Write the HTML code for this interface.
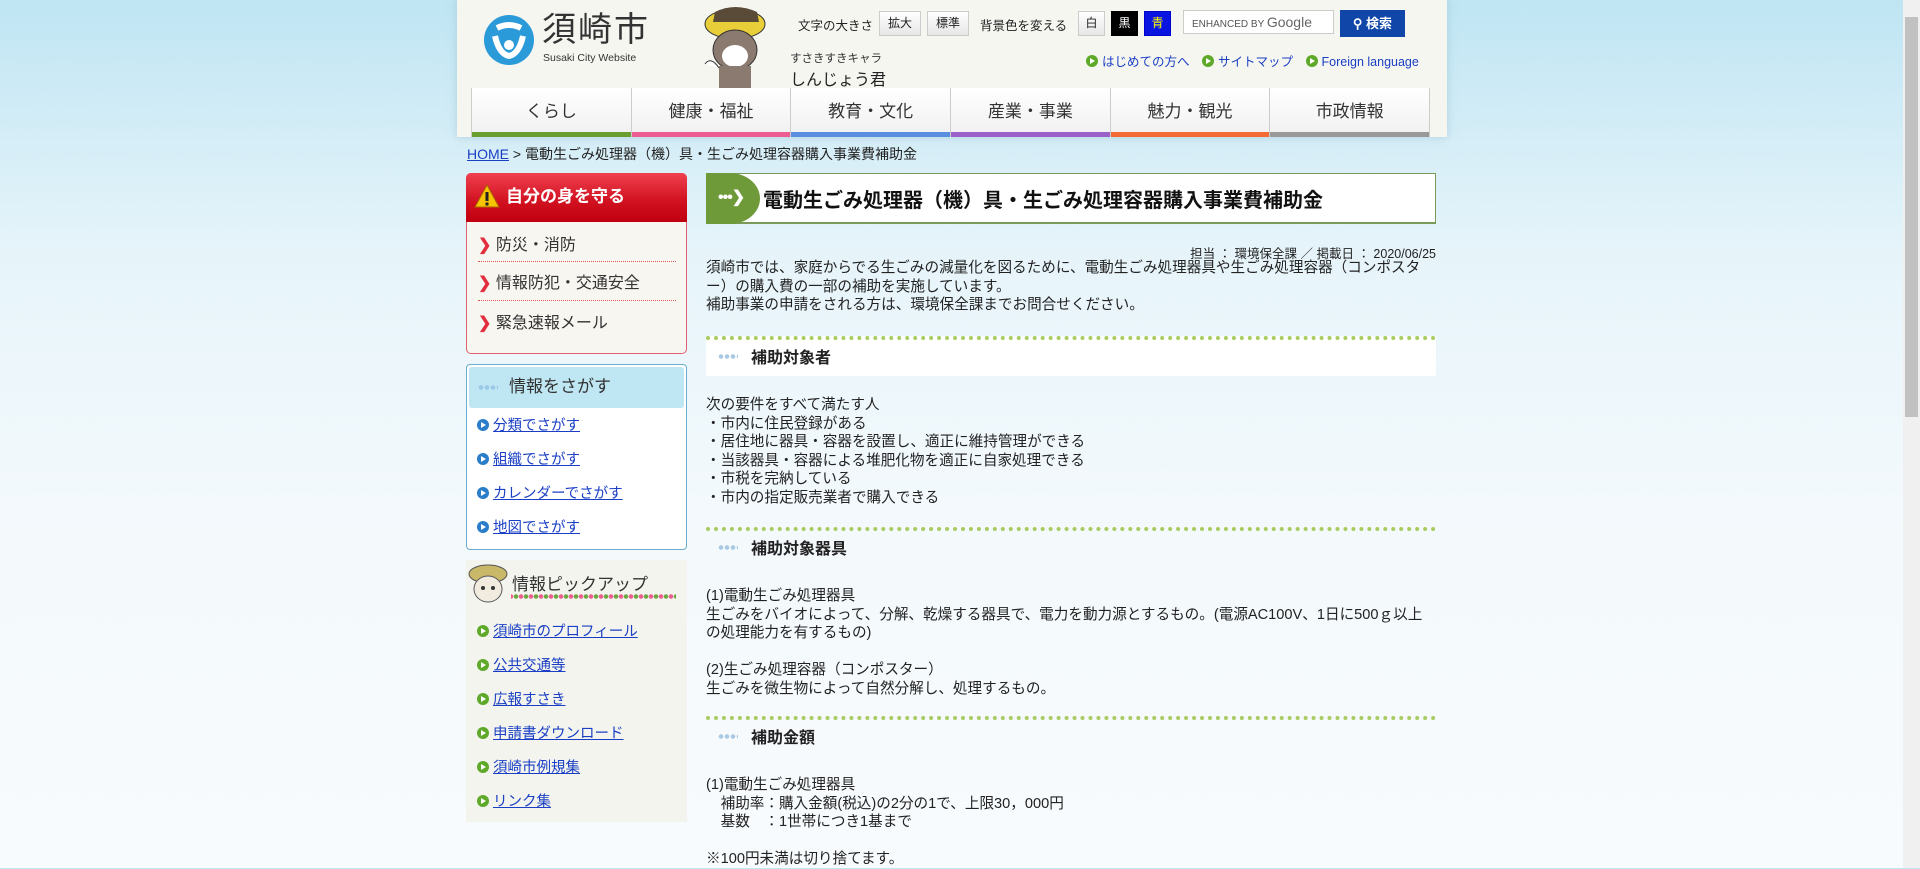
<!DOCTYPE html>
<html><head><meta charset="utf-8">
<style>
*{margin:0;padding:0;box-sizing:border-box}
body{width:1920px;height:868px;overflow:hidden;position:relative;font-family:"Liberation Sans","Noto Sans CJK JP",sans-serif;color:#222;background:linear-gradient(to bottom,#bfe5f3 0,#e6f4fa 250px,#f3f9fc 500px,#f8fbfd 868px)}
.abs{position:absolute}
a{color:#1a3fc4}
#hdr{left:457px;top:0;width:990px;height:137px;background:#f6f6f1;box-shadow:0 0 8px rgba(150,190,210,.6)}
.btn{position:absolute;top:11px;height:25px;border:1px solid #ccc;background:linear-gradient(#fff,#e6e6e6);font-size:12px;line-height:23px;text-align:center}
#nav{left:471px;top:88px;width:959px;height:49px;display:flex}
#nav div{flex:1;background:linear-gradient(#fff,#f0f0f0);border-left:1px solid #ccc;text-align:center;font-size:17px;line-height:48px;color:#333;position:relative}
#nav div:last-child{border-right:1px solid #ccc}
#nav div:after{content:"";position:absolute;left:0;right:0;bottom:0;height:5px;background:var(--c)}
.gl{display:inline-block;width:12px;height:12px;border-radius:50%;background:#5ea82a;vertical-align:-1px;margin-right:4px;position:relative}
.gl:after{content:"";position:absolute;left:4px;top:3px;border-left:5px solid #fff;border-top:3px solid transparent;border-bottom:3px solid transparent}
.bl{background:#2a7dc8}
.side a{font-size:14.5px}
.p{font-size:14.6px;line-height:18.5px}
.h2{position:absolute;left:706px;width:730px;height:40px;background:#fff;border-top:4px dotted #a8cc60}
.h2 span{position:absolute;left:45px;top:4px;font-size:16px;font-weight:bold}
.h2 i{position:absolute;left:12px;top:14px;width:20px;height:5px;background:radial-gradient(circle,#a8c8e4 2px,transparent 2.5px) 0 0/6px 5px repeat-x}
.ri{position:absolute;left:478px;font-size:16px;color:#333;line-height:20px}
.ri b{color:#e03040}
.sep{position:absolute;left:478px;width:198px;border-top:1px dotted #d55}
</style></head><body>
<div id="hdr" class="abs"></div>
<svg class="abs" style="left:483px;top:14px" width="52" height="52" viewBox="0 0 52 52"><circle cx="26" cy="26" r="25" fill="#2b9ad8"/><path d="M14 14 Q26 8 38 14 M12 22 Q16 40 26 42 Q36 40 40 22" stroke="#fff" stroke-width="6" fill="none"/><circle cx="26" cy="31" r="5" fill="#fff"/></svg>
<div class="abs" style="left:542px;top:10px;font-size:34px;line-height:40px;color:#333;letter-spacing:2px">須崎市</div>
<div class="abs" style="left:543px;top:52px;font-size:10.5px;color:#333">Susaki City Website</div>
<svg class="abs" style="left:695px;top:6px" width="84" height="84" viewBox="0 0 84 84"><ellipse cx="40" cy="18" rx="30" ry="15" fill="#e8cf3a" stroke="#333"/><path d="M20 6 Q40 -4 62 6 L64 16 L18 16Z" fill="#5a4a38"/><ellipse cx="40" cy="44" rx="22" ry="20" fill="#8a7a70" stroke="#333"/><ellipse cx="40" cy="50" rx="13" ry="11" fill="#fff"/><rect x="24" y="60" width="32" height="24" fill="#8a7a70"/><path d="M10 58 Q16 50 24 62" stroke="#333" fill="#fff"/></svg>
<div class="abs" style="left:798px;top:15px;font-size:12.5px">文字の大きさ</div>
<div class="btn" style="left:879px;width:42px">拡大</div>
<div class="btn" style="left:927px;width:42px">標準</div>
<div class="abs" style="left:980px;top:15px;font-size:12.5px">背景色を変える</div>
<div class="btn" style="left:1078px;width:27px">白</div>
<div class="btn" style="left:1111px;width:27px;background:#000;color:#fff;border-color:#000">黒</div>
<div class="btn" style="left:1144px;width:27px;background:#0a14e0;color:#ff0;border-color:#00c">青</div>
<div class="abs" style="left:1183px;top:10px;width:151px;height:24px;background:#fff;border:1px solid #ccc;font-size:10px;line-height:22px;padding-left:8px;color:#555">ENHANCED BY <span style="font-size:14px;color:#666">Google</span></div>
<div class="abs" style="left:1340px;top:10px;width:65px;height:27px;background:#1046a8;color:#fff;font-size:13px;font-weight:bold;line-height:27px;text-align:center">&#9906; 検索</div>
<div class="abs" style="left:790px;top:50px;font-size:11.5px;color:#333">すさきすきキャラ</div>
<div class="abs" style="left:790px;top:66px;font-size:16px;color:#222">しんじょう君</div>
<div class="abs" style="left:1086px;top:51px;font-size:12.5px;color:#1a3fc4;white-space:nowrap"><span class="gl"></span>はじめての方へ　<span class="gl"></span>サイトマップ　<span class="gl"></span>Foreign language</div>
<div id="nav" class="abs">
<div style="--c:#6a9e30">くらし</div><div style="--c:#ee5d92">健康・福祉</div><div style="--c:#5a8fe0">教育・文化</div><div style="--c:#9a5fc8">産業・事業</div><div style="--c:#f46a35">魅力・観光</div><div style="--c:#999">市政情報</div>
</div>
<div class="abs" style="left:467px;top:144px;font-size:14px"><a href="#">HOME</a> &gt; 電動生ごみ処理器（機）具・生ごみ処理容器購入事業費補助金</div>

<div class="abs" style="left:466px;top:173px;width:221px;height:181px;background:#f8f6f0;border:1px solid #e06070;border-radius:5px"></div>
<div class="abs" style="left:466px;top:173px;width:221px;height:49px;background:linear-gradient(#f04050,#d0101e 60%,#c00010);border-radius:5px 5px 0 0;color:#fff;font-size:17px;font-weight:bold;line-height:48px;padding-left:40px">自分の身を守る</div>
<svg class="abs" style="left:474px;top:184px" width="26" height="24"><path d="M13 1 L25 23 L1 23Z" fill="#f6c400" stroke="#a60" stroke-width="1"/><rect x="11.5" y="8" width="3" height="9" fill="#222"/><rect x="11.5" y="18.5" width="3" height="3" fill="#222"/></svg>
<div class="ri" style="top:236px"><b>❯</b> 防災・消防</div>
<div class="sep" style="top:261px"></div>
<div class="ri" style="top:274px"><b>❯</b> 情報防犯・交通安全</div>
<div class="sep" style="top:300px"></div>
<div class="ri" style="top:314px"><b>❯</b> 緊急速報メール</div>

<div class="abs" style="left:466px;top:364px;width:221px;height:186px;background:#fff;border:1px solid #6aaed0;border-radius:4px"></div>
<div class="abs" style="left:469px;top:367px;width:215px;height:41px;background:#bfe6f3;border-radius:3px;font-size:17px;line-height:40px;padding-left:40px;color:#333">情報をさがす</div>
<div class="abs" style="left:478px;top:385px;width:20px;height:5px;background:radial-gradient(circle,#9ac8e6 2px,transparent 2.5px) 0 0/6px 5px repeat-x"></div>
<div class="abs side" style="left:477px;top:409px;line-height:34px">
<div><span class="gl bl"></span><a href="#">分類でさがす</a></div>
<div><span class="gl bl"></span><a href="#">組織でさがす</a></div>
<div><span class="gl bl"></span><a href="#">カレンダーでさがす</a></div>
<div><span class="gl bl"></span><a href="#">地図でさがす</a></div>
</div>
<div class="abs" style="left:466px;top:560px;width:221px;height:262px;background:#f4f4ee"></div>
<svg class="abs" style="left:467px;top:562px" width="42" height="42"><ellipse cx="21" cy="12" rx="19" ry="9" fill="#c8b868" stroke="#555"/><ellipse cx="21" cy="27" rx="14" ry="13" fill="#f2ece0" stroke="#555"/><circle cx="16" cy="26" r="2" fill="#333"/><circle cx="26" cy="26" r="2" fill="#333"/></svg>
<div class="abs" style="left:512px;top:570px;font-size:17px;color:#333">情報ピックアップ</div>
<div class="abs" style="left:511px;top:594px;width:165px;height:5px;background:radial-gradient(circle,#6aa840 2px,transparent 2.5px) 0 0/10px 5px,radial-gradient(circle,#ee5d92 2px,transparent 2.5px) 5px 0/10px 5px"></div>
<div class="abs side" style="left:477px;top:615px;line-height:34px">
<div><span class="gl"></span><a href="#">須崎市のプロフィール</a></div>
<div><span class="gl"></span><a href="#">公共交通等</a></div>
<div><span class="gl"></span><a href="#">広報すさき</a></div>
<div><span class="gl"></span><a href="#">申請書ダウンロード</a></div>
<div><span class="gl"></span><a href="#">須崎市例規集</a></div>
<div><span class="gl"></span><a href="#">リンク集</a></div>
</div>

<div class="abs" style="left:706px;top:173px;width:730px;height:51px;background:#fff;border:1px solid #7a9a5a;border-bottom-width:2px"></div>
<div class="abs" style="left:706px;top:173px;width:54px;height:51px;background:#6f9a3a;border-radius:0 30px 30px 0/0 50% 50% 0"></div>
<div class="abs" style="left:718px;top:187px;color:#fff;font-size:16px;font-weight:bold;letter-spacing:-1px">•••❯</div>
<div class="abs" style="left:763px;top:184px;font-size:20px;font-weight:bold;color:#111">電動生ごみ処理器（機）具・生ごみ処理容器購入事業費補助金</div>
<div class="abs" style="left:706px;top:243px;width:730px;text-align:right;font-size:12.5px">担当 ： 環境保全課 ／ 掲載日 ： 2020/06/25</div>
<div class="abs p" style="left:706px;top:259px;width:730px">須崎市では、家庭からでる生ごみの減量化を図るために、電動生ごみ処理器具や生ごみ処理容器（コンポスター）の購入費の一部の補助を実施しています。<br>補助事業の申請をされる方は、環境保全課までお問合せください。</div>
<div class="h2" style="top:336px"><i></i><span>補助対象者</span></div>
<div class="abs p" style="left:706px;top:396px">次の要件をすべて満たす人<br>・市内に住民登録がある<br>・居住地に器具・容器を設置し、適正に維持管理ができる<br>・当該器具・容器による堆肥化物を適正に自家処理できる<br>・市税を完納している<br>・市内の指定販売業者で購入できる</div>
<div class="h2" style="top:527px;background:none"><i></i><span>補助対象器具</span></div>
<div class="abs p" style="left:706px;top:587px;width:730px">(1)電動生ごみ処理器具<br>生ごみをバイオによって、分解、乾燥する器具で、電力を動力源とするもの。(電源AC100V、1日に500ｇ以上の処理能力を有するもの)<br><br>(2)生ごみ処理容器（コンポスター）<br>生ごみを微生物によって自然分解し、処理するもの。</div>
<div class="h2" style="top:716px;background:none"><i></i><span>補助金額</span></div>
<div class="abs p" style="left:706px;top:776px">(1)電動生ごみ処理器具<br>　補助率：購入金額(税込)の2分の1で、上限30，000円<br>　基数　：1世帯につき1基まで<br><br>※100円未満は切り捨てます。</div>
<div class="abs" style="left:1903px;top:0;width:17px;height:868px;background:#f0f0f0"></div>
<div class="abs" style="left:1905px;top:17px;width:13px;height:400px;background:#c1c1c1"></div>
</body></html>
